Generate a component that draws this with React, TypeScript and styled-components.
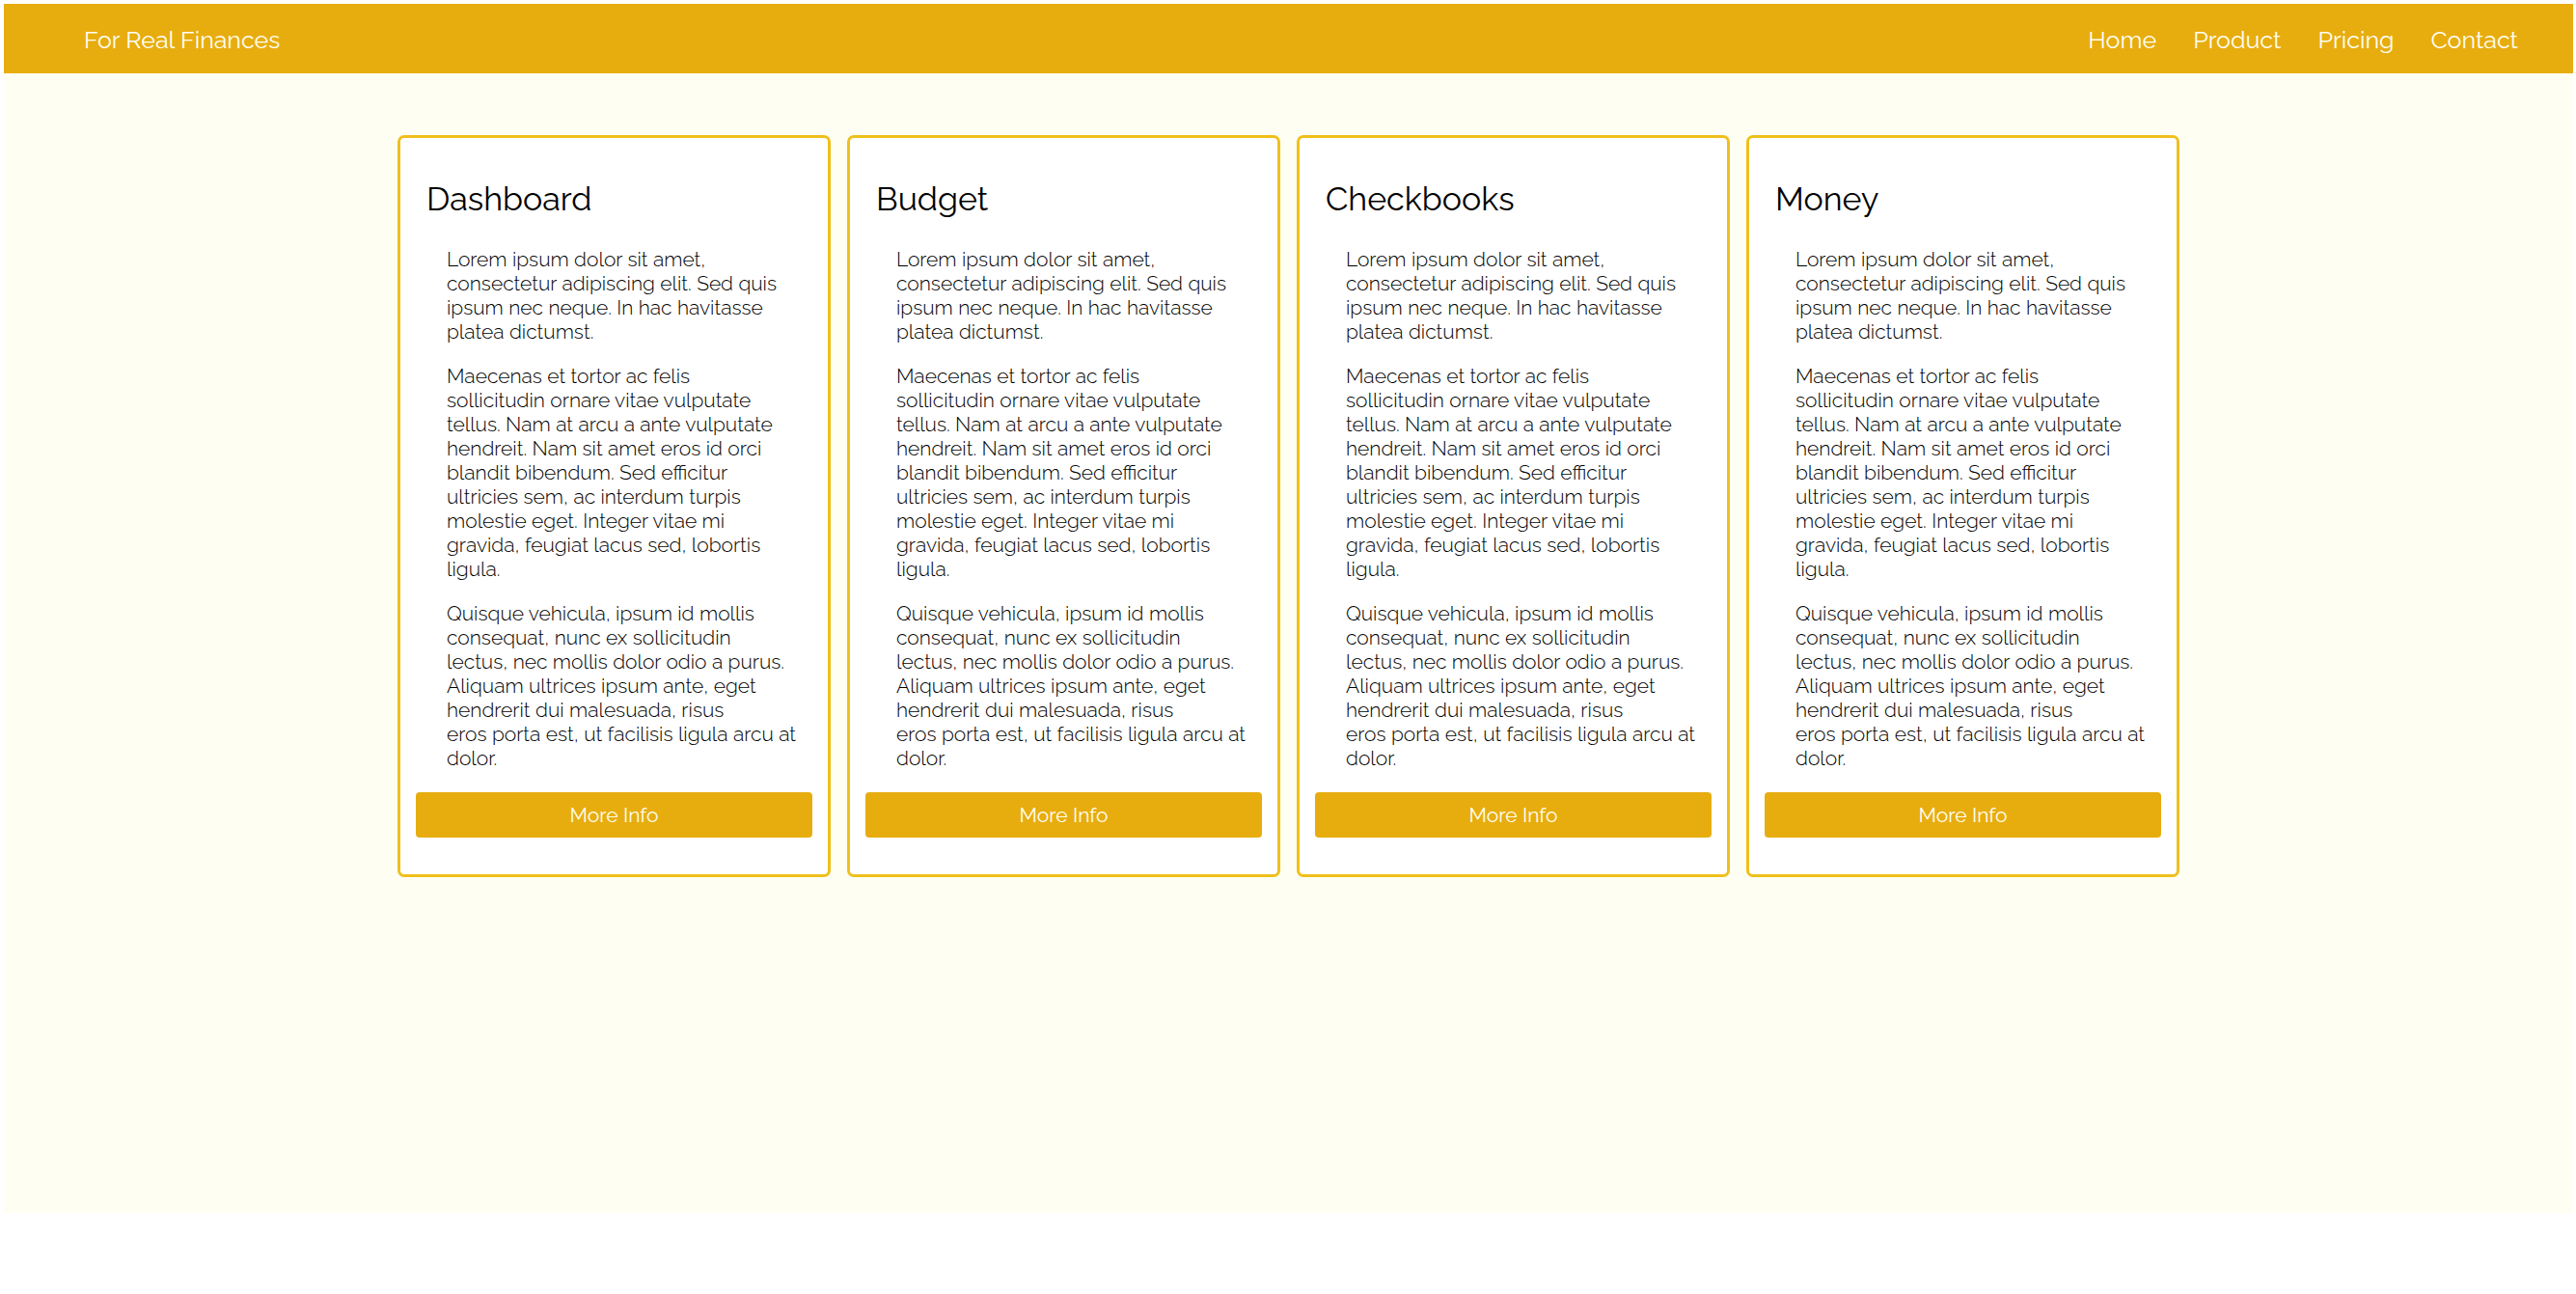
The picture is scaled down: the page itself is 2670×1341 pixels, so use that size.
import React from 'react';
import styled, { createGlobalStyle } from 'styled-components';

const GlobalStyle = createGlobalStyle`
  * { box-sizing: border-box; }
  body {
    margin: 0;
    background: #ffffff;
    color: #000000;
    font-family: Raleway, Lato, "Open Sans", sans-serif;
  }
`;

const Page = styled.div`
  display: flex;
  flex-direction: column;
  min-height: 100vh;
  padding: 4px 3px 84px 4px;
`;

const TopBar = styled.header`
  display: flex;
  align-items: center;
  justify-content: space-between;
  height: 72px;
  padding: 2px 57px 0 83px;
  background: #e7ad0f;
`;

const BarLink = styled.a`
  color: #fffef2;
  font-size: 25px;
  line-height: 32px;
  text-decoration: none;
`;

const Nav = styled.nav`
  display: flex;
  gap: 38px;
`;

const Main = styled.main`
  flex: 1;
  padding: 64px 32px;
  background: #fffef2;
`;

const CardRow = styled.div`
  display: flex;
  gap: 17px;
  max-width: 1847px;
  margin: 0 auto;
`;

const Card = styled.article`
  flex: 1;
  padding: 41px 16px 38px;
  border: 3px solid #efc01c;
  border-radius: 7px;
  background: #ffffff;
`;

const CardTitle = styled.h2`
  margin: 0 12px 28px 11px;
  font-size: 34px;
  font-weight: 400;
  line-height: 44px;
`;

const CardText = styled.p`
  margin: 0 16px 21px 32px;
  color: #000000;
  font-size: 21px;
  font-weight: 300;
  line-height: 25px;
  white-space: pre-line;
`;

const MoreButton = styled.button`
  display: block;
  width: 100%;
  margin-top: 23px;
  padding: 11px;
  border: 0;
  border-radius: 4px;
  background: #e7ad0f;
  color: #fffef2;
  font-family: inherit;
  font-size: 21px;
  line-height: 25px;
`;

const links = ['Home', 'Product', 'Pricing', 'Contact'];
const titles = ['Dashboard', 'Budget', 'Checkbooks', 'Money'];
const paragraphs = [
  `Lorem ipsum dolor sit amet,
consectetur adipiscing elit. Sed quis
ipsum nec neque. In hac havitasse
platea dictumst.`,
  `Maecenas et tortor ac felis
sollicitudin ornare vitae vulputate
tellus. Nam at arcu a ante vulputate
hendreit. Nam sit amet eros id orci
blandit bibendum. Sed efficitur
ultricies sem, ac interdum turpis
molestie eget. Integer vitae mi
gravida, feugiat lacus sed, lobortis
ligula.`,
  `Quisque vehicula, ipsum id mollis
consequat, nunc ex sollicitudin
lectus, nec mollis dolor odio a purus.
Aliquam ultrices ipsum ante, eget
hendrerit dui malesuada, risus
eros porta est, ut facilisis ligula arcu at
dolor.`,
];

export default function App() {
  return (
    <Page>
      <GlobalStyle />
      <TopBar>
        <BarLink href="#">For Real Finances</BarLink>
        <Nav>
          {links.map((label) => (
            <BarLink key={label} href={`#${label.toLowerCase()}`}>{label}</BarLink>
          ))}
        </Nav>
      </TopBar>
      <Main>
        <CardRow>
          {titles.map((title) => (
            <Card key={title}>
              <CardTitle>{title}</CardTitle>
              {paragraphs.map((text) => (
                <CardText key={text}>{text}</CardText>
              ))}
              <MoreButton type="button">More Info</MoreButton>
            </Card>
          ))}
        </CardRow>
      </Main>
    </Page>
  );
}
